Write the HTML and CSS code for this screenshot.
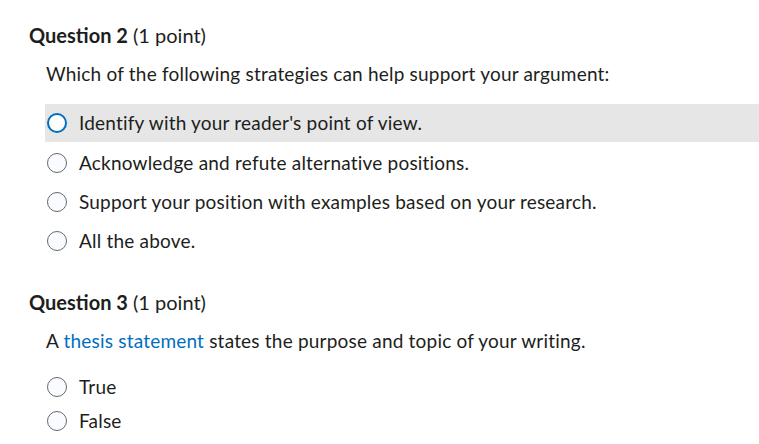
FILE: index.html
```html
<!DOCTYPE html>
<html>
<head>
<meta charset="utf-8">
<link rel="stylesheet" href="styles.css">
</head>
<body>
<div class="page">
  <section class="question q2">
    <h2 class="q-title"><strong>Question 2</strong> (1 point)</h2>
    <p class="q-text">Which of the following strategies can help support your argument:</p>
    <div class="options">
      <label class="option hover"><span class="radio focus"></span><span class="opt-text">Identify with your reader's point of view.</span></label>
      <label class="option"><span class="radio"></span><span class="opt-text">Acknowledge and refute alternative positions.</span></label>
      <label class="option"><span class="radio"></span><span class="opt-text">Support your position with examples based on your research.</span></label>
      <label class="option"><span class="radio"></span><span class="opt-text">All the above.</span></label>
    </div>
  </section>
  <section class="question q3">
    <h2 class="q-title"><strong>Question 3</strong> (1 point)</h2>
    <p class="q-text">A <a class="link">thesis statement</a> states the purpose and topic of your writing.</p>
    <div class="options tf">
      <label class="option"><span class="radio"></span><span class="opt-text">True</span></label>
      <label class="option"><span class="radio"></span><span class="opt-text">False</span></label>
    </div>
  </section>
</div>
</body>
</html>
```
FILE: styles.css
```css
html, body {
  margin: 0;
  padding: 0;
  background: #ffffff;
}
body {
  font-family: Lato, "Noto Sans", sans-serif;
  color: #1d1e20;
  font-size: 19px;
  letter-spacing: 0.2px;
}
.page {
  padding: 22px 0 0 29px;
}
.q-title {
  margin: 0;
  font-size: 20px;
  font-weight: 400;
  line-height: 26px;
  color: #1d1e20;
  letter-spacing: 0;
}
.q-title strong {
  font-weight: 700;
}
.q-text {
  margin: 13px 0 0 17px;
  line-height: 26px;
}
.options {
  margin: 17px 0 0 16px;
  display: flex;
  flex-direction: column;
}
.option {
  display: flex;
  align-items: center;
  gap: 12px;
  height: 39px;
  padding-left: 2px;
}
.option.hover {
  background: #e6e6e6;
  height: 38px;
  margin-bottom: 1px;
}
.radio {
  box-sizing: border-box;
  width: 20px;
  height: 20px;
  border-radius: 50%;
  border: 1px solid #64696c;
  background: #f9fbff;
  flex: none;
}
.radio.focus {
  border: 2px solid #006fbf;
  background: #ffffff;
}
.opt-text {
  line-height: 24px;
}
.q3 {
  margin-top: 29px;
}
.link {
  color: #006fbf;
  text-decoration: none;
}
.tf {
  margin-top: 16px;
}
.tf .option {
  height: 34px;
}
```
